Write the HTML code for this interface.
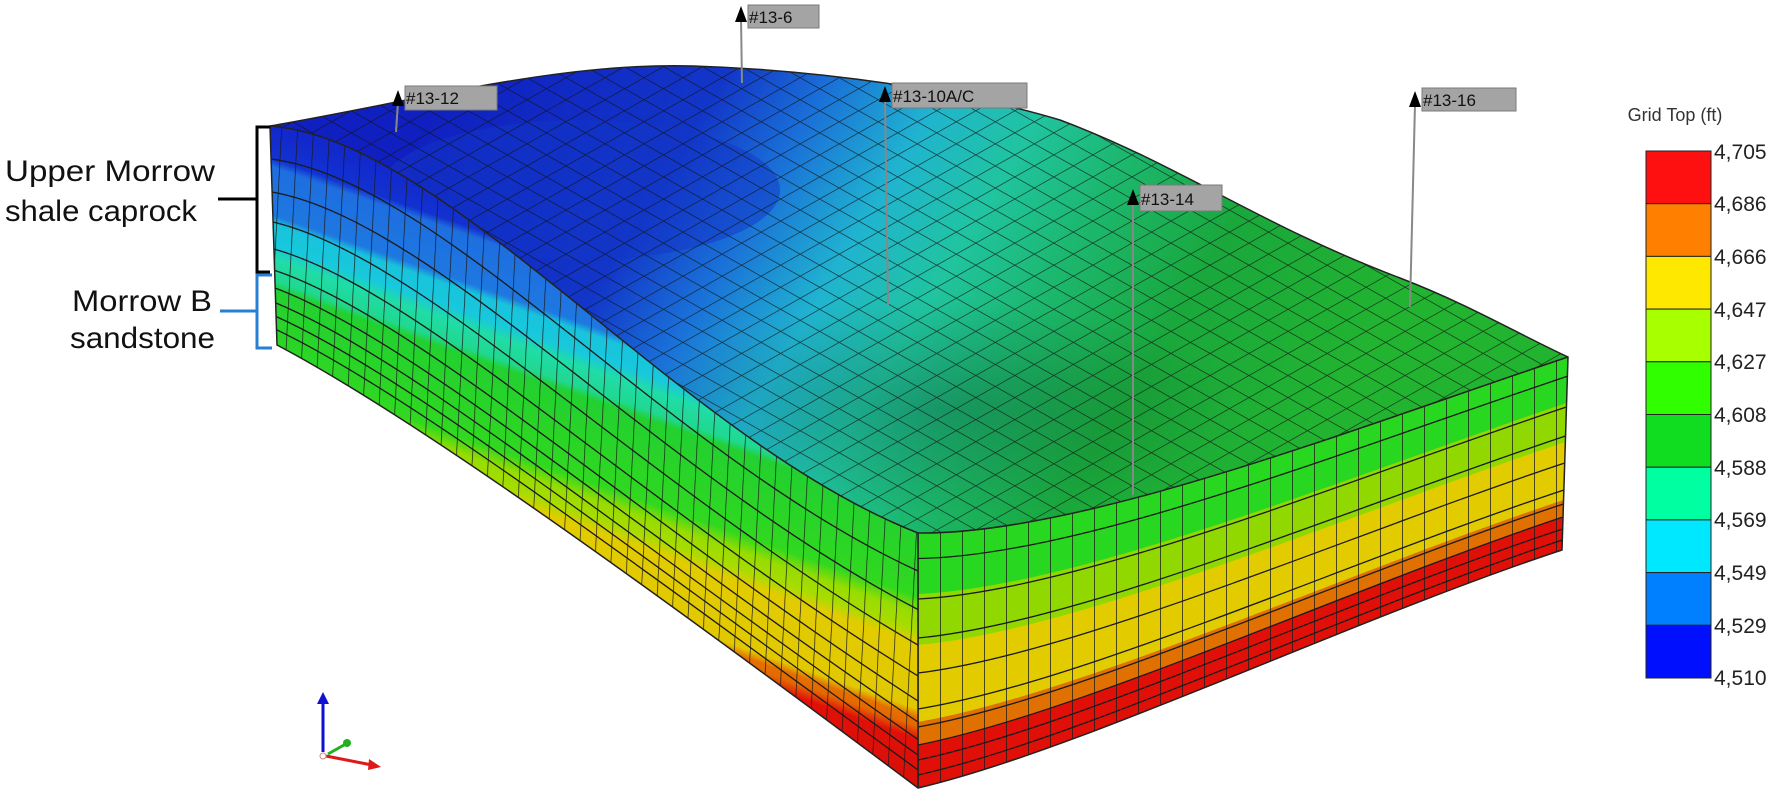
<!DOCTYPE html>
<html><head><meta charset="utf-8"><style>
html,body{margin:0;padding:0;background:#fff;}
svg{display:block;}
</style></head><body>
<svg width="1776" height="795" viewBox="0 0 1776 795" xmlns="http://www.w3.org/2000/svg" font-family="Liberation Sans, Arial, sans-serif">
<defs>
<linearGradient id="lf" gradientUnits="userSpaceOnUse" x1="270" y1="127" x2="135" y2="514">
<stop offset="0" stop-color="#1228cc"/><stop offset="0.07" stop-color="#1232d0"/>
<stop offset="0.09" stop-color="#1e6ee0"/><stop offset="0.2" stop-color="#1e78e0"/>
<stop offset="0.22" stop-color="#18c4dc"/><stop offset="0.27" stop-color="#18c8dc"/>
<stop offset="0.30" stop-color="#20dca8"/><stop offset="0.35" stop-color="#20d890"/>
<stop offset="0.37" stop-color="#22d030"/><stop offset="0.56" stop-color="#30d820"/>
<stop offset="0.6" stop-color="#98dc00"/><stop offset="0.64" stop-color="#a8dc00"/>
<stop offset="0.67" stop-color="#e2cc00"/><stop offset="0.82" stop-color="#e2c800"/>
<stop offset="0.84" stop-color="#e47000"/><stop offset="0.86" stop-color="#e46800"/>
<stop offset="0.89" stop-color="#e01008"/><stop offset="1" stop-color="#d81008"/>
</linearGradient>
<linearGradient id="tf" gradientUnits="userSpaceOnUse" x1="450" y1="80" x2="1250" y2="560">
<stop offset="0" stop-color="#1020c0"/><stop offset="0.25" stop-color="#1236c8"/>
<stop offset="0.35" stop-color="#1a70d8"/><stop offset="0.46" stop-color="#20b4d0"/>
<stop offset="0.56" stop-color="#20c4a0"/><stop offset="0.66" stop-color="#1cb870"/>
<stop offset="0.8" stop-color="#1aa83c"/><stop offset="1" stop-color="#22b430"/>
</linearGradient>
<radialGradient id="sh" cx="0.5" cy="0.5" r="0.5">
<stop offset="0" stop-color="#000" stop-opacity="0.2"/><stop offset="1" stop-color="#000" stop-opacity="0"/>
</radialGradient>
<pattern id="vl" width="16" height="20" patternUnits="userSpaceOnUse" patternTransform="skewX(-3)">
<path d="M0 0V20" stroke="#1a1a1a" stroke-width="1.4"/></pattern>
<pattern id="vr" width="22" height="20" patternUnits="userSpaceOnUse" patternTransform="translate(918 0)">
<path d="M0 0V20" stroke="#1a1a1a" stroke-width="1.5"/></pattern>
<pattern id="gr" width="24" height="24" patternUnits="userSpaceOnUse" patternTransform="scale(1.15 0.65) rotate(45)">
<path d="M0 0H24M0 0V24" stroke="#111" stroke-width="1.8" fill="none"/></pattern>
<clipPath id="cl"><path d="M270,126 C450,140 680,440 918,533 L918,788 C600,550 400,410 277,345 Z"/></clipPath>
<clipPath id="cr"><path d="M918,533 C1080,535 1350,430 1568,357 L1562,550 C1350,620 1080,750 918,788 Z"/></clipPath>
<clipPath id="ct"><path d="M270,126 C420,100 560,62 693,66 C820,70 960,90 1060,120 C1180,165 1260,225 1400,278 C1470,305 1520,335 1568,357 C1350,430 1080,535 918,533 C680,440 450,140 270,126 Z"/></clipPath>
</defs>

<path d="M270,126 C450,140 680,440 918,533 L918,788 C600,550 400,410 277,345 Z" fill="url(#lf)"/>
<g clip-path="url(#cl)">
<rect x="260" y="100" width="670" height="700" fill="url(#vl)"/>
<g fill="none" stroke="#1a1a1a" stroke-width="1.3">
<path d="M271,159 C442.5,180.5 668,456.5 918,571"/>
<path d="M272,192 C435,221 656,473 918,609.5"/>
<path d="M273,222 C428,259 645,488 918,645"/>
<path d="M274,249 C422,291 635,502 918,676"/>
<path d="M275,270.5 C417,318 627,512.6 918,701"/>
<path d="M275,288 C413,340 621,521 918,722"/>
<path d="M276,303 C409.5,358.7 615,529 918,739.5"/>
<path d="M276,316.5 C406.5,375 610,535.7 918,755"/>
<path d="M276.5,329.7 C403.5,391 605.6,542 918,770"/>
</g></g>

<path d="M918,533 C1080,535 1350,430 1568,357 L1562,550 C1350,620 1080,750 918,788 Z" fill="#e01008"/>
<path d="M918,533 C1080,535 1350,430 1568,357 L1563,517 C1350,588 1080,713 918,745 Z" fill="#e07000"/>
<path d="M918,533 C1080,535 1350,430 1568,357 L1563.6,500 C1350,571 1080,694 918,722 Z" fill="#e2cc00"/>
<path d="M918,533 C1080,535 1350,430 1568,357 L1565.4,442 C1350,514 1080,630 918,645 Z" fill="#90d800"/>
<path d="M918,533 C1080,535 1350,430 1568,357 L1566.6,403 C1350,476 1080,587 918,594 Z" fill="#28d820"/>
<g clip-path="url(#cr)">
<rect x="918" y="340" width="660" height="460" fill="url(#vr)"/>
<g fill="none" stroke="#1a1a1a" stroke-width="1.3">
<path d="M918,558.5 C1080,556.5 1350,449 1567.4,376.3"/>
<path d="M918,599 C1080,591 1350,479 1566.4,407"/>
<path d="M918,638 C1080,623 1350,508 1565.5,436"/>
<path d="M918,673 C1080,653 1350,534.5 1564.7,463"/>
<path d="M918,709 C1080,683 1350,561 1563.9,490"/>
<path d="M918,727 C1080,698 1350,574 1563.4,504"/>
<path d="M918,745 C1080,713 1350,588 1563,517"/>
<path d="M918,760 C1080,726 1350,599 1562.7,529"/>
<path d="M918,775 C1080,739 1350,610.5 1562.3,540"/>
</g></g>

<path d="M270,126 C420,100 560,62 693,66 C820,70 960,90 1060,120 C1180,165 1260,225 1400,278 C1470,305 1520,335 1568,357 C1350,430 1080,535 918,533 C680,440 450,140 270,126 Z" fill="url(#tf)"/>
<g clip-path="url(#ct)">
<ellipse cx="940" cy="410" rx="300" ry="110" fill="url(#sh)"/>
<ellipse cx="580" cy="190" rx="200" ry="70" fill="#1236c8" opacity="0.5"/>
<rect x="260" y="50" width="1320" height="500" fill="url(#gr)" opacity="0.75"/>
</g>
<path d="M270,126 C420,100 560,62 693,66 C820,70 960,90 1060,120 C1180,165 1260,225 1400,278 C1470,305 1520,335 1568,357 L1562,550 C1350,620 1080,750 918,788 C600,550 400,410 277,345 Z" fill="none" stroke="#222" stroke-width="1.5"/>
<path d="M270,126 C450,140 680,440 918,533 C1080,535 1350,430 1568,357 M918,533 V788" fill="none" stroke="#222" stroke-width="1.5"/>

<g stroke="#888" stroke-width="2">
<line x1="741" y1="18" x2="742" y2="83"/>
<line x1="398" y1="102" x2="396" y2="132"/>
<line x1="885" y1="98" x2="888" y2="305"/>
<line x1="1133" y1="202" x2="1133" y2="495"/>
<line x1="1415" y1="104" x2="1410" y2="307"/>
</g>
<g fill="#000">
<path d="M741,6 L735,22 L747,22 Z"/>
<path d="M398,90 L392,106 L404,106 Z"/>
<path d="M885,86 L879,102 L891,102 Z"/>
<path d="M1133,189 L1127,205 L1139,205 Z"/>
<path d="M1415,91 L1409,107 L1421,107 Z"/>
</g>
<g fill="#a4a4a4" stroke="#7a7a7a" stroke-width="1">
<rect x="748" y="5" width="71" height="23"/>
<rect x="405" y="86" width="92" height="24"/>
<rect x="892" y="83" width="135" height="25"/>
<rect x="1140" y="185" width="82" height="26"/>
<rect x="1422" y="88" width="94" height="23"/>
</g>
<g font-size="17" fill="#111">
<text x="749" y="23">#13-6</text>
<text x="406" y="104">#13-12</text>
<text x="893" y="102">#13-10A/C</text>
<text x="1141" y="205">#13-14</text>
<text x="1423" y="106">#13-16</text>
</g>

<g font-size="30" fill="#111">
<text x="5" y="181" textLength="210" lengthAdjust="spacingAndGlyphs">Upper Morrow</text>
<text x="5" y="221" textLength="192" lengthAdjust="spacingAndGlyphs">shale caprock</text>
<text x="72" y="311" textLength="140" lengthAdjust="spacingAndGlyphs">Morrow B</text>
<text x="70" y="348" textLength="145" lengthAdjust="spacingAndGlyphs">sandstone</text>
</g>
<path d="M270,127 H257 V272 H270 M257,199 H218" fill="none" stroke="#000" stroke-width="3"/>
<path d="M272,275 H257 V348 H272 M257,311 H220" fill="none" stroke="#2a7fd0" stroke-width="3"/>

<line x1="323" y1="752" x2="323" y2="702" stroke="#1010d0" stroke-width="3"/>
<path d="M323,692 L317,704 L329,704 Z" fill="#1010d0"/>
<line x1="326" y1="756" x2="372" y2="765" stroke="#e01818" stroke-width="3"/>
<path d="M381,767 L369,759 L368,770 Z" fill="#e01818"/>
<line x1="328" y1="754" x2="344" y2="745" stroke="#20b020" stroke-width="3"/>
<circle cx="347" cy="743" r="4" fill="#20b020"/>
<circle cx="323" cy="756" r="3" fill="#fff" stroke="#c88" stroke-width="1"/>

<text x="1675" y="121" font-size="18" fill="#333" text-anchor="middle">Grid Top (ft)</text>
<g stroke="#222" stroke-width="1">
<rect x="1646" y="151" width="65" height="52.7" fill="#ff1010"/>
<rect x="1646" y="203.7" width="65" height="52.7" fill="#ff8000"/>
<rect x="1646" y="256.4" width="65" height="52.7" fill="#ffe800"/>
<rect x="1646" y="309.1" width="65" height="52.7" fill="#a8ff00"/>
<rect x="1646" y="361.8" width="65" height="52.7" fill="#30ff00"/>
<rect x="1646" y="414.5" width="65" height="52.7" fill="#10dd20"/>
<rect x="1646" y="467.2" width="65" height="52.7" fill="#00ffa0"/>
<rect x="1646" y="519.9" width="65" height="52.7" fill="#00e8ff"/>
<rect x="1646" y="572.6" width="65" height="52.7" fill="#0080ff"/>
<rect x="1646" y="625.3" width="65" height="52.7" fill="#0010ff"/>
</g>
<g font-size="21" fill="#222">
<text x="1714" y="159">4,705</text>
<text x="1714" y="211">4,686</text>
<text x="1714" y="264">4,666</text>
<text x="1714" y="317">4,647</text>
<text x="1714" y="369">4,627</text>
<text x="1714" y="422">4,608</text>
<text x="1714" y="475">4,588</text>
<text x="1714" y="527">4,569</text>
<text x="1714" y="580">4,549</text>
<text x="1714" y="633">4,529</text>
<text x="1714" y="685">4,510</text>
</g>
</svg>
</body></html>
